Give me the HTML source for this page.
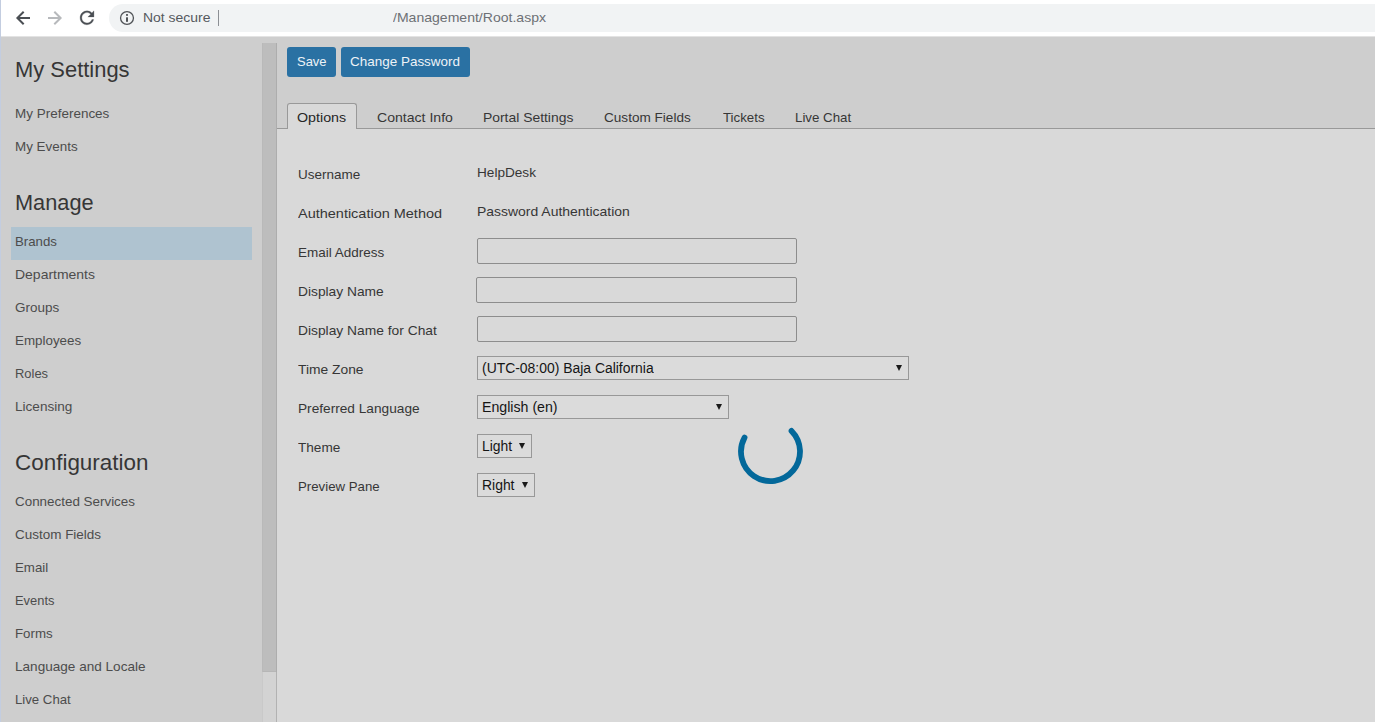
<!DOCTYPE html>
<html lang="en">
<head>
<meta charset="utf-8">
<title>Management</title>
<style>
html,body{margin:0;padding:0;}
body{width:1375px;height:722px;overflow:hidden;position:relative;background:#cecece;font-family:"Liberation Sans",sans-serif;}
.abs{position:absolute;}
.t{position:absolute;white-space:nowrap;line-height:20px;height:20px;transform-origin:0 50%;}
#chrome{left:0;top:0;width:1375px;height:36px;background:#fff;}
#pill{left:109px;top:4px;width:1300px;height:28px;border-radius:14px;background:#f1f3f4;}
#edge{left:0;top:0;width:1px;height:722px;background:#c3cde0;}
#sep{left:218px;top:10px;width:1px;height:16px;background:#8c8f94;}
#sidebar{left:1px;top:37px;width:261px;height:685px;background:#cecece;}
#shade{left:0;top:36px;width:1375px;height:1px;background:#e3e3e3;}
#hl{left:11px;top:227px;width:241px;height:33px;background:#afc3d0;}
#sbtrack{left:262px;top:43px;width:15px;height:679px;background:#d3d3d3;box-shadow:inset 1px 0 0 #c9c9c9, inset -1px 0 0 #b2b2b2;}
#sbthumb{left:262px;top:43px;width:15px;height:629px;background:#bdbdbd;box-shadow:inset 1px 0 0 #b9b9b9, inset -1px 0 0 #adadad, inset 0 -1px 0 #b6b6b6;}
#main{left:277px;top:129px;width:1098px;height:593px;background:#d9d9d9;}
#tabline{left:277px;top:128px;width:1098px;height:1px;background:#999;}
#tab{left:287px;top:103px;width:68px;height:25px;background:#d9d9d9;border:1px solid #999;border-bottom:none;border-radius:3px 3px 0 0;}
.btn{background:#2a71a3;border-radius:3px;top:47px;height:30px;}
.inp{border:1px solid #8d8d8d;border-radius:2px;background:#d9d9d9;box-sizing:border-box;height:26px;}
.sel{border:1px solid #989898;background:#dbdbdb;box-sizing:border-box;height:24px;left:477px;}
.arr{width:0;height:0;border-left:3.5px solid transparent;border-right:3.5px solid transparent;border-top:6px solid #1a1a1a;}
</style>
</head>
<body>
<div class="abs" id="chrome"></div>
<div class="abs" id="pill"></div>
<div class="abs" id="sep"></div>
<svg class="abs" style="left:0;top:0" width="110" height="36" viewBox="0 0 110 36"><g fill="none" stroke="#4b4f54" stroke-width="2"><path d="M30 18H17.6"/><path d="M23.7 11.7L17.4 18l6.3 6.3"/></g><g fill="none" stroke="#b7b9bc" stroke-width="2"><path d="M48 18H60.4"/><path d="M54.3 11.7L60.6 18l-6.3 6.3"/></g><g transform="translate(76.6 7.4) scale(0.867)"><path fill="#4b4f54" stroke="#4b4f54" stroke-width="0.3" d="M17.65 6.35C16.2 4.9 14.21 4 12 4c-4.42 0-7.99 3.58-7.99 8s3.57 8 7.99 8c3.73 0 6.84-2.55 7.73-6h-2.08c-.82 2.33-3.04 4-5.65 4-3.31 0-6-2.69-6-6s2.69-6 6-6c1.66 0 3.14.69 4.22 1.78L13 11h7V4l-2.35 2.35z"/></g></svg>
<svg class="abs" style="left:119px;top:10px" width="16" height="16" viewBox="0 0 16 16"><circle cx="8" cy="8" r="6.45" fill="none" stroke="#505357" stroke-width="1.3"/><rect x="7" y="7.3" width="2" height="4.5" fill="#505357"/><rect x="7" y="4.1" width="2" height="1.7" fill="#505357"/></svg>

<div class="abs" id="sidebar"></div>
<div class="abs" id="shade"></div>
<div class="abs" id="hl"></div>
<div class="abs" id="sbtrack"></div>
<div class="abs" id="sbthumb"></div>
<div class="abs" id="main"></div>
<div class="abs" id="tabline"></div>
<div class="abs" id="tab"></div>
<div class="abs btn" style="left:287px;width:49px"></div>
<div class="abs btn" style="left:341px;width:129px"></div>

<div class="abs inp" style="left:477px;top:238px;width:320px"></div>
<div class="abs inp" style="left:476px;top:277px;width:321px"></div>
<div class="abs inp" style="left:477px;top:316px;width:320px"></div>
<div class="abs sel" style="top:356px;width:432px"></div>
<div class="abs sel" style="top:395px;width:252px"></div>
<div class="abs sel" style="top:434px;width:55px"></div>
<div class="abs sel" style="top:473px;width:58px"></div>
<div class="abs arr" style="left:895.5px;top:365px"></div>
<div class="abs arr" style="left:715.5px;top:404px"></div>
<div class="abs arr" style="left:518.5px;top:443px"></div>
<div class="abs arr" style="left:521.5px;top:482px"></div>

<svg class="abs" style="left:729px;top:410px" width="82" height="82" viewBox="-41 -41 82 82"><path transform="translate(0.5 0.6)" d="M 21.04 -20.68 A 29.5 29.5 0 1 1 -25.97 -13.99" fill="none" stroke="#03689a" stroke-width="5.8" stroke-linecap="round"/></svg>

<span class="t" style="left:15.37px;top:60px;font-size:22.5px;transform:scaleX(0.9747);color:#363636">My Settings</span>
<span class="t" style="left:15.40px;top:193px;font-size:22.5px;transform:scaleX(0.9670);color:#363636">Manage</span>
<span class="t" style="left:15.20px;top:453px;font-size:22.5px;transform:scaleX(0.9974);color:#363636">Configuration</span>
<span class="t" style="left:14.80px;top:104px;font-size:13.5px;transform:scaleX(0.9980);color:#4c4c4c">My Preferences</span>
<span class="t" style="left:14.81px;top:137px;font-size:13.5px;transform:scaleX(0.9941);color:#4c4c4c">My Events</span>
<span class="t" style="left:14.82px;top:232px;font-size:13.5px;transform:scaleX(0.9804);color:#4c4c4c">Brands</span>
<span class="t" style="left:14.77px;top:265px;font-size:13.5px;transform:scaleX(1.0349);color:#4c4c4c">Departments</span>
<span class="t" style="left:15.03px;top:298px;font-size:13.5px;transform:scaleX(0.9968);color:#4c4c4c">Groups</span>
<span class="t" style="left:14.81px;top:331px;font-size:13.5px;transform:scaleX(0.9904);color:#4c4c4c">Employees</span>
<span class="t" style="left:14.84px;top:364px;font-size:13.5px;transform:scaleX(0.9566);color:#4c4c4c">Roles</span>
<span class="t" style="left:14.80px;top:397px;font-size:13.5px;transform:scaleX(1.0048);color:#4c4c4c">Licensing</span>
<span class="t" style="left:15.14px;top:492px;font-size:13.5px;transform:scaleX(0.9931);color:#4c4c4c">Connected Services</span>
<span class="t" style="left:15.14px;top:525px;font-size:13.5px;transform:scaleX(0.9977);color:#4c4c4c">Custom Fields</span>
<span class="t" style="left:14.85px;top:558px;font-size:13.5px;transform:scaleX(0.9846);color:#4c4c4c">Email</span>
<span class="t" style="left:14.84px;top:591px;font-size:13.5px;transform:scaleX(0.9551);color:#4c4c4c">Events</span>
<span class="t" style="left:14.82px;top:624px;font-size:13.5px;transform:scaleX(0.9841);color:#4c4c4c">Forms</span>
<span class="t" style="left:14.82px;top:657px;font-size:13.5px;transform:scaleX(1.0053);color:#4c4c4c">Language and Locale</span>
<span class="t" style="left:14.82px;top:690px;font-size:13.5px;transform:scaleX(0.9772);color:#4c4c4c">Live Chat</span>
<span class="t" style="left:296.69px;top:52px;font-size:13.5px;transform:scaleX(0.9596);color:#eef3f7">Save</span>
<span class="t" style="left:349.96px;top:52px;font-size:13.5px;transform:scaleX(0.9974);color:#eef3f7">Change Password</span>
<span class="t" style="left:297.36px;top:108px;font-size:13.5px;transform:scaleX(1.0558);color:#262626">Options</span>
<span class="t" style="left:377.30px;top:108px;font-size:13.5px;transform:scaleX(1.0431);color:#363636">Contact Info</span>
<span class="t" style="left:483.39px;top:108px;font-size:13.5px;transform:scaleX(1.0290);color:#363636">Portal Settings</span>
<span class="t" style="left:604.46px;top:108px;font-size:13.5px;transform:scaleX(1.0052);color:#363636">Custom Fields</span>
<span class="t" style="left:722.66px;top:108px;font-size:13.5px;transform:scaleX(0.9836);color:#363636">Tickets</span>
<span class="t" style="left:794.62px;top:108px;font-size:13.5px;transform:scaleX(0.9843);color:#363636">Live Chat</span>
<span class="t" style="left:297.82px;top:165px;font-size:13.5px;transform:scaleX(0.9991);color:#363636">Username</span>
<span class="t" style="left:297.80px;top:204px;font-size:13.5px;transform:scaleX(1.0722);color:#363636">Authentication Method</span>
<span class="t" style="left:297.83px;top:243px;font-size:13.5px;transform:scaleX(0.9983);color:#363636">Email Address</span>
<span class="t" style="left:297.79px;top:282px;font-size:13.5px;transform:scaleX(1.0195);color:#363636">Display Name</span>
<span class="t" style="left:297.78px;top:321px;font-size:13.5px;transform:scaleX(1.0226);color:#363636">Display Name for Chat</span>
<span class="t" style="left:298.10px;top:360px;font-size:13.5px;transform:scaleX(1.0234);color:#363636">Time Zone</span>
<span class="t" style="left:297.80px;top:399px;font-size:13.5px;transform:scaleX(1.0124);color:#363636">Preferred Language</span>
<span class="t" style="left:298.10px;top:438px;font-size:13.5px;transform:scaleX(1.0070);color:#363636">Theme</span>
<span class="t" style="left:297.82px;top:477px;font-size:13.5px;transform:scaleX(0.9806);color:#363636">Preview Pane</span>
<span class="t" style="left:476.79px;top:163px;font-size:13.5px;transform:scaleX(1.0074);color:#363636">HelpDesk</span>
<span class="t" style="left:476.78px;top:202px;font-size:13.5px;transform:scaleX(1.0333);color:#363636">Password Authentication</span>
<span class="t" style="left:481.82px;top:358px;font-size:14px;transform:scaleX(0.9937);color:#151515">(UTC-08:00) Baja California</span>
<span class="t" style="left:481.79px;top:397px;font-size:14px;transform:scaleX(1.0118);color:#151515">English (en)</span>
<span class="t" style="left:481.81px;top:436px;font-size:14px;transform:scaleX(0.9909);color:#151515">Light</span>
<span class="t" style="left:481.81px;top:475px;font-size:14px;transform:scaleX(0.9939);color:#151515">Right</span>
<span class="t" style="left:142.73px;top:8px;font-size:13px;transform:scaleX(1.0725);color:#55595e">Not secure</span>
<span class="t" style="left:393.05px;top:8px;font-size:13px;transform:scaleX(1.0802);color:#6d7075">/Management/Root.aspx</span>
<div class="abs" id="edge"></div>
</body>
</html>
